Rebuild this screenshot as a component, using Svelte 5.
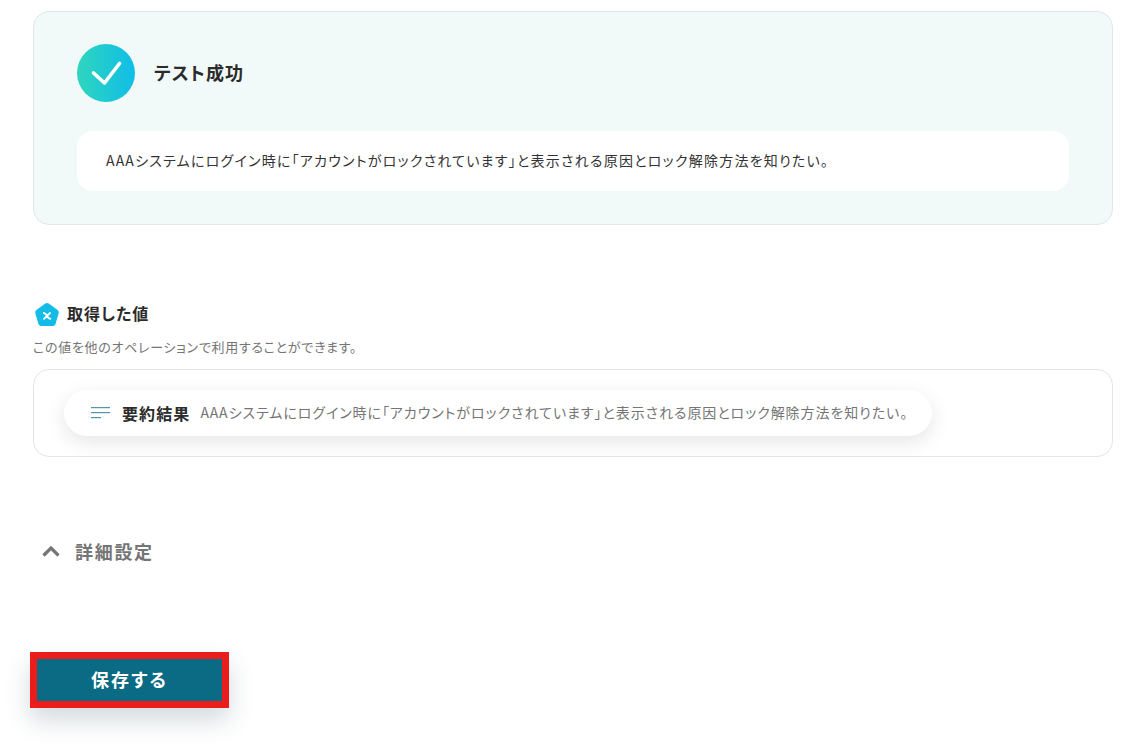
<script>
  const message = "AAAシステムにログイン時に「アカウントがロックされています」と表示される原因とロック解除方法を知りたい。";
</script>

<div class="page">
  <section class="result">
    <div class="result-head">
      <svg class="check" width="58" height="58" viewBox="0 0 58 58">
        <defs>
          <linearGradient id="ok" x1="0" y1="0" x2="1" y2="0">
            <stop offset="0" stop-color="#2fd6bd" />
            <stop offset="1" stop-color="#10bde8" />
          </linearGradient>
        </defs>
        <circle cx="29" cy="29" r="29" fill="url(#ok)" />
        <path d="M16.500 29 L27.500 39 L42.500 19.500" fill="none" stroke="#fff" stroke-width="3.600" stroke-linecap="round" stroke-linejoin="round" />
      </svg>
      <h2>テスト成功</h2>
    </div>
    <p class="result-text">{message}</p>
  </section>

  <section class="values">
    <div class="values-head">
      <svg width="26" height="26" viewBox="0 0 26 26">
        <path d="M11.200 1.600 Q13 .400 14.800 1.600 L23.600 8 Q25.300 9.200 24.700 11.200 L21.500 22 Q20.900 24 18.900 24 L7.100 24 Q5.100 24 4.500 22 L1.300 11.200 Q.700 9.200 2.400 8 Z" fill="#12bce6" />
        <path d="M9.800 11 Q12 11.500 13 13.800 Q14 16.200 16.400 16.800 M16 11 L10 16.800" fill="none" stroke="#fff" stroke-width="1.800" stroke-linecap="round" />
      </svg>
      <h3>取得した値</h3>
    </div>
    <p class="hint">この値を他のオペレーションで利用することができます。</p>
    <div class="values-box">
      <div class="pill">
        <svg width="20" height="12" viewBox="0 0 20 12">
          <rect x="0" y="0" width="19" height="1.200" fill="#0b6a84" opacity=".7" />
          <rect x="0" y="5" width="19" height="1.200" fill="#0b6a84" opacity=".7" />
          <rect x="0" y="10" width="10" height="1.200" fill="#0b6a84" opacity=".7" />
        </svg>
        <span class="pill-name">要約結果</span>
        <span class="pill-value">{message}</span>
      </div>
    </div>
  </section>

  <div class="details">
    <svg width="18" height="12" viewBox="0 0 18 12">
      <path d="M1.500 10.500 L9 3 L16.500 10.500" fill="none" stroke="#757575" stroke-width="3.200" />
    </svg>
    <span>詳細設定</span>
  </div>

  <button class="save">保存する</button>
</div>

<style>
  :global(body) {
    background: #fff;
    font-family: "Noto Sans CJK JP", sans-serif;
    color: #2b2b2b;
  }

  .page {
    padding: 11px 31px 37px 33px;
    font-feature-settings: "palt";
  }

  h2, h3, p {
    margin: 0;
  }

  .result {
    background: #f1faf9;
    border: 1px solid #e2e6e8;
    border-radius: 16px;
    padding: 32px 43px 33px;
    height: 214px;
    box-sizing: border-box;
  }

  .result-head {
    display: flex;
    align-items: center;
    gap: 19px;
  }

  h2 {
    font-size: 18px;
    font-weight: 700;
    letter-spacing: 1.1px;
    padding-bottom: 2px;
  }

  .result-text {
    margin-top: 29px;
    background: #fff;
    border-radius: 16px;
    height: 60px;
    line-height: 58px;
    padding-left: 29px;
    font-size: 14px;
    letter-spacing: 1.23px;
    color: #333;
  }

  .values {
    margin-top: 77px;
  }

  .values-head {
    display: flex;
    align-items: center;
    gap: 7px;
    padding-left: 1px;
  }

  h3 {
    font-size: 16px;
    line-height: 20px;
    font-weight: 700;
    letter-spacing: 1px;
    padding-bottom: 4px;
  }

  .hint {
    margin-top: 10px;
    font-size: 13px;
    color: #757575;
    line-height: 18px;
    letter-spacing: 0.7px;
  }

  .values-box {
    margin-top: 13px;
    border: 1px solid #e2e6e8;
    border-radius: 16px;
    height: 88px;
    box-sizing: border-box;
    padding: 20px 30px;
  }

  .pill {
    display: inline-flex;
    align-items: center;
    height: 46px;
    padding: 0 24px 0 27px;
    border-radius: 23px;
    background: #fff;
    box-shadow: 0 6px 20px rgba(0, 0, 0, 0.1);
  }

  .pill-name {
    margin-left: 11px;
    font-size: 16px;
    font-weight: 700;
    letter-spacing: 1.1px;
  }

  .pill-value {
    margin-left: 10px;
    padding-bottom: 2px;
    font-size: 14px;
    color: #757575;
    letter-spacing: 0.94px;
  }

  .details {
    display: flex;
    align-items: center;
    gap: 15px;
    margin: 81px 0 0 9px;
    font-size: 18px;
    font-weight: 700;
    color: #757575;
    letter-spacing: 1.7px;
  }

  .save {
    display: block;
    margin-top: 88px;
    margin-left: -3px;
    width: 199px;
    height: 56px;
    box-sizing: border-box;
    background: #0b6a84;
    border: 7px solid #ea1c1c;
    color: #fff;
    font: inherit;
    font-size: 18px;
    font-weight: 700;
    letter-spacing: 2px;
    box-shadow: 0 12px 24px rgba(40, 70, 90, 0.2);
    font-feature-settings: "palt";
    padding-bottom: 3px;
  }
</style>
